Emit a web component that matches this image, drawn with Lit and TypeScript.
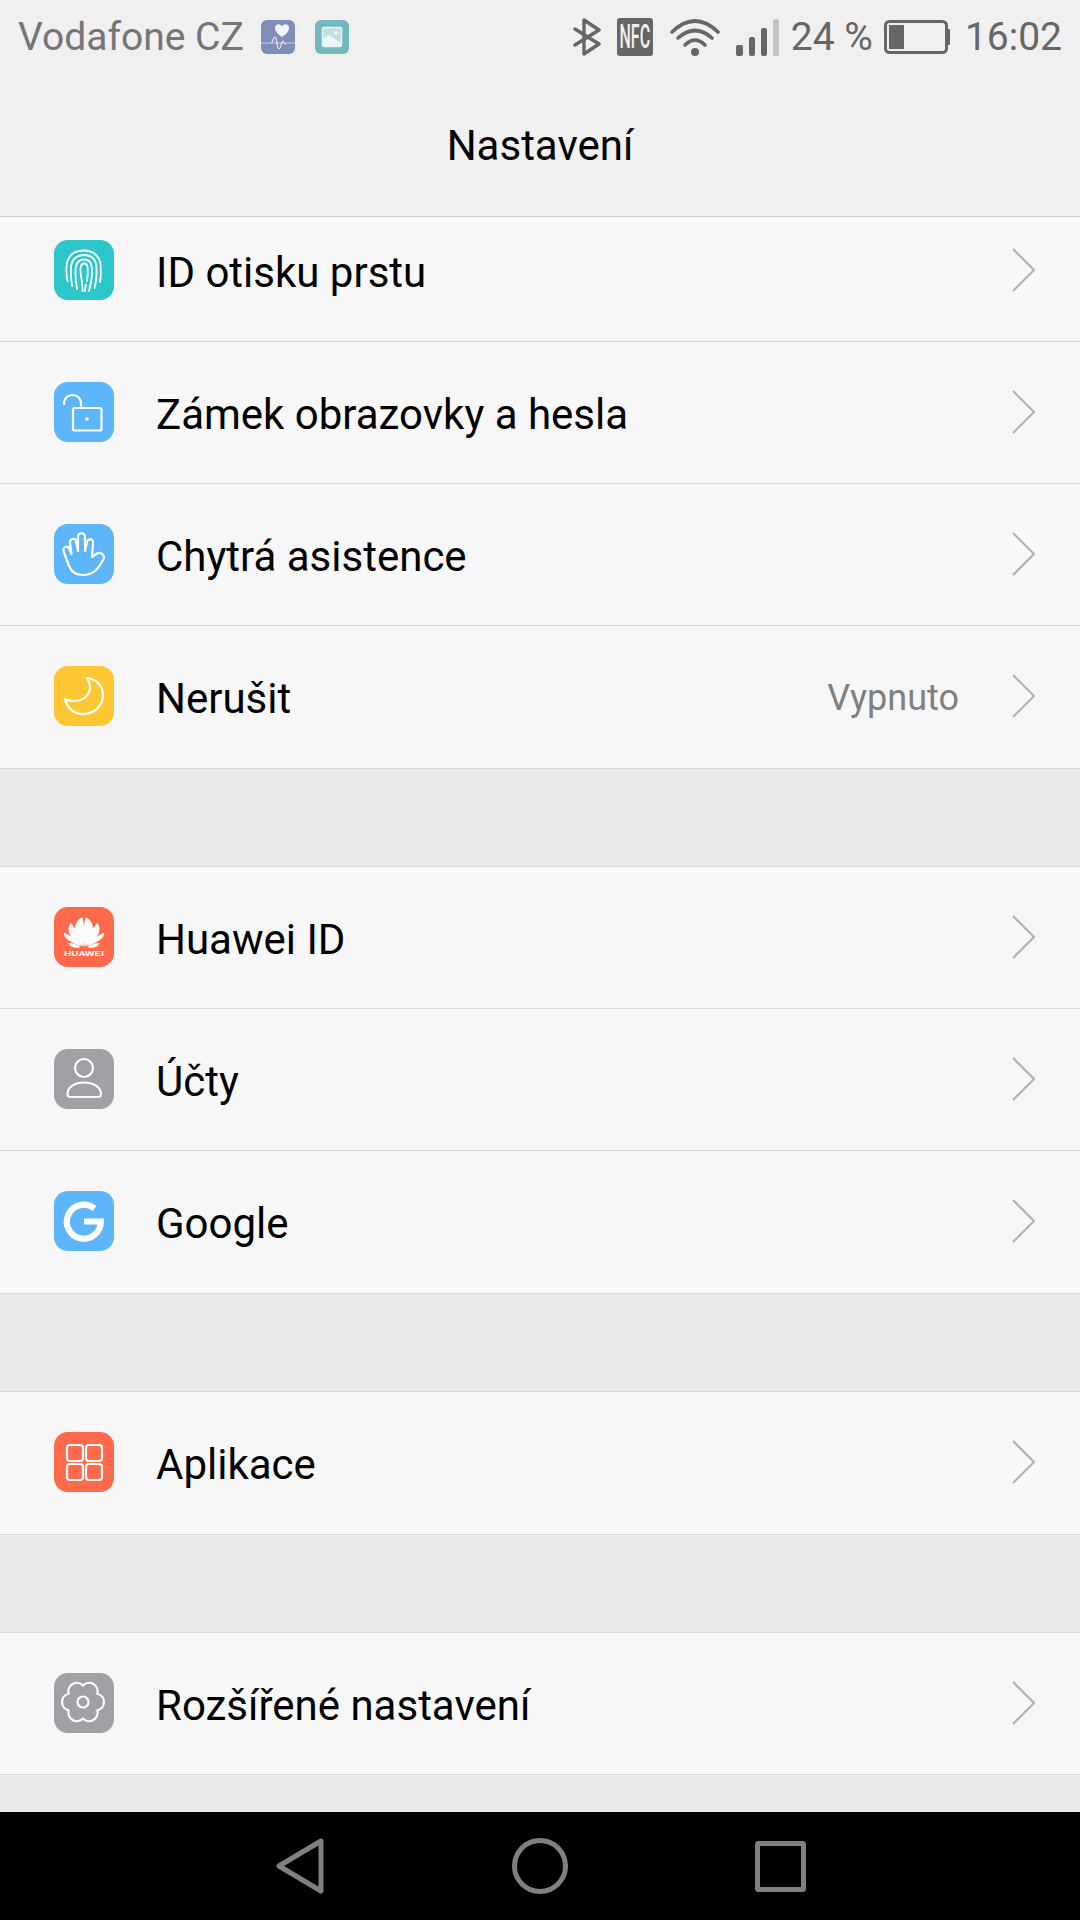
import { LitElement, html, css, svg } from "lit";
import { customElement } from "lit/decorators.js";

const S = (body: unknown) => html`<svg class="ico" viewBox="0 0 60 60" fill="none" stroke="#fff" stroke-width="2.2" stroke-linecap="round" stroke-linejoin="round">${body}</svg>`;

const petals = svg`
  <path d="M29.5 40C24 33 19.5 25 21.5 18C22.5 14.5 25.5 11.5 28 10.500C30.5 13 30.5 30 29.5 40Z"/>
  <path d="M28 39.5C21 34 14.5 29 14.5 22C14.5 19.5 15.5 17.5 16.5 16C21 20 26 30 28 39.5Z"/>
  <path d="M27 39.5C21 37 13 33.5 10.5 29C10 28 10 26 10 25.5C15 28 23 33 27 39.5Z"/>
  <path d="M26.5 40.2C22 41.5 17 41 14 36C18 35.5 23 37.5 26.5 40.2Z"/>`;

const ICONS: Record<string, unknown> = {
  finger: S(svg`<g stroke-width="1.8">
    <path d="M13.5 41C12 33 12 26 13.5 21C16 13.5 23 10.5 30 10.5C39 10.5 45.5 16 46.5 24C47 31 47 37 46 42"/>
    <path d="M18 46C17 38 16 30 17.5 24C19 17.5 25 15 30 15C37 15 41.5 19 42.3 26C43 33 42.5 40 40.5 48"/>
    <path d="M23 49C22 42 20.5 33 22 26C23.5 21 27 19.5 30 19.5C34 19.5 37.3 22 37.8 27C38.5 34 37.5 42 35 51"/>
    <path d="M28.5 51C29 43 26 35 26.5 28C27 24.6 29 23.5 30.3 23.5C32.5 23.5 33.4 25 33.6 28C34 34 33.6 38 33 41M32 44.5L30.8 51"/>
  </g>`),
  lock: S(svg`<rect x="19" y="26" width="28.5" height="22.5" rx="1.5"/><path d="M10 22C10 16 14 13 18.5 13C23 13 27 16 27 22V26" /><circle cx="33" cy="37" r="1.8" fill="#fff" stroke="none"/>`),
  hand: S(svg`<path d="M29 51C22 51 17 47 15 42L9.5 27C8.5 23.5 13 21 15 24.5L17.5 30L16 19C15.5 14.5 21 13.5 22 17L24 27V13C24 8 31 8 31 13V27L33 18C34 14 39.5 14.5 39 19L38 33L43 29.5C46.5 27.5 51.5 31 49.5 35C46 41 42 51 29 51Z"/>`),
  moon: S(svg`<path d="M33 12C43 13 49 21 49 29C49 40 40 48 29 48C20 48 13 42 11 33C14 35 18 35 21 35C29 35 36 29 36 21C36 18 35 15 33 12Z"/>`),
  huawei: html`<svg class="ico" viewBox="0 0 60 60"><g fill="#fff">${petals}<g transform="translate(60 0) scale(-1 1)">${petals}</g>
    <text class="hw" x="30" y="48.7" text-anchor="middle" textLength="40" lengthAdjust="spacingAndGlyphs">HUAWEI</text></g></svg>`,
  person: S(svg`<circle cx="30" cy="19" r="9"/><path d="M16 48H44Q47 48 47 45C47 38 39 33.5 30 33.5C21 33.5 13.5 38 13.5 45Q13.5 48 16 48Z"/>`),
  google: S(svg`<path stroke-width="6.2" stroke-linecap="butt" stroke-linejoin="miter" d="M40.5 17.5A17 17 0 1 0 46.8 30.5H30"/>`),
  apps: S(svg`<rect x="13" y="13" width="16" height="16" rx="3"/><rect x="32" y="13" width="16" height="16" rx="3"/><rect x="13" y="32" width="16" height="16" rx="3"/><rect x="32" y="32" width="16" height="16" rx="3"/>`),
  gear: S(svg`<path d="M29 12.5A8.5 8.5 0 0 1 43.3 20.7A8.5 8.5 0 0 1 43.3 37.3A8.5 8.5 0 0 1 29 45.5A8.5 8.5 0 0 1 14.700 37.3A8.5 8.5 0 0 1 14.700 20.7A8.5 8.5 0 0 1 29 12.5Z"/><circle cx="29" cy="29" r="5.5"/>`),
};

interface Row { label: string; icon: string; color: string; value?: string; }

const GROUPS: Row[][] = [
  [
    { label: "ID otisku prstu", icon: "finger", color: "#2cc6cb" },
    { label: "Zámek obrazovky a hesla", icon: "lock", color: "#5db6f9" },
    { label: "Chytrá asistence", icon: "hand", color: "#5db6f9" },
    { label: "Nerušit", icon: "moon", color: "#ffc733", value: "Vypnuto" },
  ],
  [
    { label: "Huawei ID", icon: "huawei", color: "#ff6a4d" },
    { label: "Účty", icon: "person", color: "#a0a1a6" },
    { label: "Google", icon: "google", color: "#5db6f9" },
  ],
  [{ label: "Aplikace", icon: "apps", color: "#ff6a4d" }],
  [{ label: "Rozšířené nastavení", icon: "gear", color: "#a0a1a6" }],
];

@customElement("app-root")
export class AppRoot extends LitElement {
  static styles = css`
    :host { display: flex; flex-direction: column; width: 1080px; height: 1920px; overflow: hidden; background: #f7f7f7; font-family: Roboto, "Noto Sans", sans-serif; }
    .head { flex: none; height: 216px; background: #f0f0f0; border-bottom: 1px solid #cfcfcf; display: flex; flex-direction: column; position: relative; z-index: 1; }
    .status { height: 74px; display: flex; align-items: center; padding: 0 18px; color: #757575; font-size: 39px; }
    .note { width: 34px; height: 34px; margin-left: 17px; display: block; }
    .note.second { margin-left: 20px; }
    .spacer { flex: 1; }
    .st { display: block; flex: none; }
    .st-text { color: #666; font-size: 39px; }
    .bt { width: 28px; height: 38px; }
    .nfc { width: 36px; height: 38px; margin-left: 16px; border-radius: 3px; background: #666; color: #f0f0f0; font-size: 16px; font-weight: 500; display: flex; align-items: center; justify-content: center; flex: none; }
    .nfc span { display: block; transform: scaleY(2.1); line-height: 1; }
    .wifi { width: 50px; height: 38px; margin-left: 17px; }
    .signal { width: 43px; height: 37px; margin-left: 16px; }
    .pct { margin-left: 12px; }
    .battery { width: 66px; height: 34px; margin-left: 11px; }
    .clock { margin-left: 15px; }
    .title { flex: 1; display: flex; align-items: center; justify-content: center; font-size: 42px; color: #000; }
    .list { flex: 1; min-height: 0; overflow: hidden; }
    .group { background: #f7f7f7; border-top: 1px solid #d8d8d8; }
    .group + .group { margin-top: 97px; }
    .group:first-child { border-top: none; margin-top: -17px; }
    .gap-wrap { background: #eaeaea; }
    .row { height: 140px; padding-bottom: 1px; display: flex; align-items: center; padding-left: 54px; border-bottom: 1px solid #d8d8d8; }
    .row:last-child { padding-bottom: 2px; }
    .group:nth-child(4) .row { padding-bottom: 1px; }
    .tile { width: 60px; height: 60px; border-radius: 14px; flex: none; }
    .ico { display: block; width: 60px; height: 60px; }
    .hw { font: 700 8px "Liberation Sans", Arial, sans-serif; }
    .label { margin-left: 42px; font-size: 42px; color: #000; flex: 1; white-space: nowrap; position: relative; top: 2px; }
    .value { font-size: 36px; color: #808080; margin-right: 52px; position: relative; top: 2px; }
    .chev { width: 24px; height: 44px; margin-right: 45px; flex: none; display: block; }
    .end { flex: 1; background: #f7f7f7; }
    .nav { flex: none; height: 108px; background: #000; display: flex; align-items: center; padding-left: 276px; }
    .nav svg { display: block; flex: none; }
    .back { width: 48px; height: 56px; }
    .home { width: 56px; height: 56px; margin-left: 188px; }
    .recent { width: 51px; height: 51px; margin-left: 187px; }
  `;

  private row(r: Row) {
    return html`<div class="row">
      <div class="tile" style="background:${r.color}">${ICONS[r.icon]}</div>
      <div class="label">${r.label}</div>
      ${r.value ? html`<div class="value">${r.value}</div>` : null}
      <svg class="chev" viewBox="0 0 24 44" fill="none" stroke="#b2b2b2" stroke-width="2"><path d="M2 1L23 22L2 43"/></svg>
    </div>`;
  }

  render() {
    return html`
      <div class="head">
        <div class="status">
          <span>Vodafone CZ</span>
          <svg class="note" viewBox="0 0 34 34">
            <rect width="34" height="34" rx="6" fill="#7f8db8"/>
            <path d="M0 23H34" stroke="#c5cce0" stroke-width="1.2"/>
            <path d="M21 17C15 13 14 10 14 8C14 4 19 3 21 6.500C23 3 28 4 28 8C28 10 27 13 21 17Z" fill="#f4f5fa"/>
            <path d="M10 23C12 23 12 17 14 17C16 17 16 29 18 29C20 29 20 21 22 21C23 21 23 25 25 24" fill="none" stroke="#fff" stroke-width="1"/>
          </svg>
          <svg class="note second" viewBox="0 0 34 34">
            <rect width="34" height="34" rx="6" fill="#74b8bf"/>
            <rect x="7.500" y="7.500" width="19" height="19" rx="1.500" fill="#bfe0e3" stroke="#e8f4f5" stroke-width="1.500"/>
            <path d="M8 26V19L14 15L26 23V26Z" fill="#eef6f7"/>
            <circle cx="21" cy="13" r="2" fill="#eef6f7"/>
          </svg>
          <div class="spacer"></div>
          <svg class="st bt" viewBox="0 0 28 38" fill="none" stroke="#666" stroke-width="3.400" stroke-linecap="round" stroke-linejoin="round"><path d="M2 27L26 12L11 2V36L26 26L2 11"/></svg>
          <div class="nfc"><span>NFC</span></div>
          <svg class="st wifi" viewBox="0 0 50 38" fill="none" stroke="#666" stroke-width="3.600" stroke-linecap="round">
            <path d="M2 14Q25 -8 48 14"/><path d="M8 20Q25 5 42 20"/><path d="M15 27Q25 17 35 27"/><circle cx="25" cy="34" r="4" fill="#666" stroke="none"/>
          </svg>
          <svg class="st signal" viewBox="0 0 43 37">
            <rect x="0" y="26" width="7" height="11" rx="2" fill="#666"/><rect x="13" y="18" width="6" height="19" rx="2" fill="#666"/><rect x="25" y="9" width="6" height="28" rx="2" fill="#666"/><rect x="37" y="0" width="6" height="37" rx="2" fill="#c4c4c4"/>
          </svg>
          <span class="st-text pct">24 %</span>
          <svg class="st battery" viewBox="0 0 66 34">
            <rect x="1.500" y="1.500" width="61" height="31" rx="4" fill="none" stroke="#666" stroke-width="3"/>
            <rect x="5" y="5" width="15" height="24" fill="#666"/>
            <rect x="63" y="9" width="3" height="16" rx="1" fill="#666"/>
          </svg>
          <span class="st-text clock">16:02</span>
        </div>
        <div class="title">Nastavení</div>
      </div>
      <div class="list gap-wrap">
        ${GROUPS.map((g) => html`<div class="group">${g.map((r) => this.row(r))}</div>`)}
        <div class="end"></div>
      </div>
      <div class="nav">
        <svg class="back" viewBox="0 0 48 56" fill="none" stroke="#808080" stroke-width="5" stroke-linejoin="round"><path d="M45 3L3 28L45 53Z"/></svg>
        <svg class="home" viewBox="0 0 56 56" fill="none" stroke="#808080" stroke-width="5"><circle cx="28" cy="28" r="25.500"/></svg>
        <svg class="recent" viewBox="0 0 51 51" fill="none" stroke="#808080" stroke-width="5" stroke-linejoin="round"><rect x="2.500" y="2.500" width="46" height="46" rx="1"/></svg>
      </div>
    `;
  }
}
